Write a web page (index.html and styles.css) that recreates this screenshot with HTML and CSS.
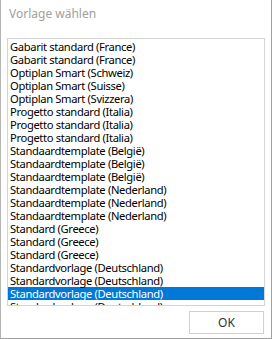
FILE: index.html
```html
<!DOCTYPE html>
<html>
<head>
<meta charset="utf-8">
<link rel="stylesheet" href="styles.css">
</head>
<body>
<div class="window">
  <div class="title">Vorlage wählen</div>
  <div class="listbox">
    <div class="item">Gabarit standard (France)</div>
    <div class="item">Gabarit standard (France)</div>
    <div class="item">Optiplan Smart (Schweiz)</div>
    <div class="item">Optiplan Smart (Suisse)</div>
    <div class="item">Optiplan Smart (Svizzera)</div>
    <div class="item">Progetto standard (Italia)</div>
    <div class="item">Progetto standard (Italia)</div>
    <div class="item">Progetto standard (Italia)</div>
    <div class="item">Standaardtemplate (België)</div>
    <div class="item">Standaardtemplate (België)</div>
    <div class="item">Standaardtemplate (België)</div>
    <div class="item">Standaardtemplate (Nederland)</div>
    <div class="item">Standaardtemplate (Nederland)</div>
    <div class="item">Standaardtemplate (Nederland)</div>
    <div class="item">Standard (Greece)</div>
    <div class="item">Standard (Greece)</div>
    <div class="item">Standard (Greece)</div>
    <div class="item">Standardvorlage (Deutschland)</div>
    <div class="item">Standardvorlage (Deutschland)</div>
    <div class="item selected">Standardvorlage (Deutschland)</div>
    <div class="item">Standardvorlage (Deutschland)</div>
  </div>
  <div class="footer">
    <button class="ok">OK</button>
  </div>
</div>
</body>
</html>
```
FILE: styles.css
```css
* { box-sizing: border-box; }
html, body { margin: 0; padding: 0; background: #fff; }
.window {
  width: 272px;
  height: 339px;
  border-left: 1px solid #b4b4b4;
  border-right: 1px solid #a0a0a0;
  border-bottom: 1px solid #a0a0a0;
  background: #fff;
  font-family: "Noto Sans", "Open Sans", sans-serif;
  font-size: 11px;
  color: #000;
  display: flex;
  flex-direction: column;
  overflow: hidden;
}
.title {
  padding: 6px 0 0 8px;
  height: 38px;
  font-size: 12px;
  line-height: 16px;
  color: #a0a0a0;
}
.listbox {
  margin-left: 6px;
  width: 258px;
  height: 268px;
  border: 1px solid #d4d4d4;
  padding-top: 1px;
  overflow: hidden;
  font-family: "Noto Sans", "Open Sans", sans-serif;
  font-size: 11.2px;
  letter-spacing: -0.35px;
}
.item {
  height: 13px;
  line-height: 13px;
  padding-left: 2px;
  white-space: nowrap;
}
.item.selected {
  background: #0078d7;
  color: #fff;
}
.footer {
  display: flex;
  justify-content: flex-end;
  padding: 5px 7px 0 0;
}
.ok {
  width: 75px;
  height: 23px;
  border: 1px solid #d0d0d0;
  background: #fff;
  font-family: "Noto Sans", "Open Sans", sans-serif;
  font-size: 12px;
  color: #333;
  padding: 0;
}
```
